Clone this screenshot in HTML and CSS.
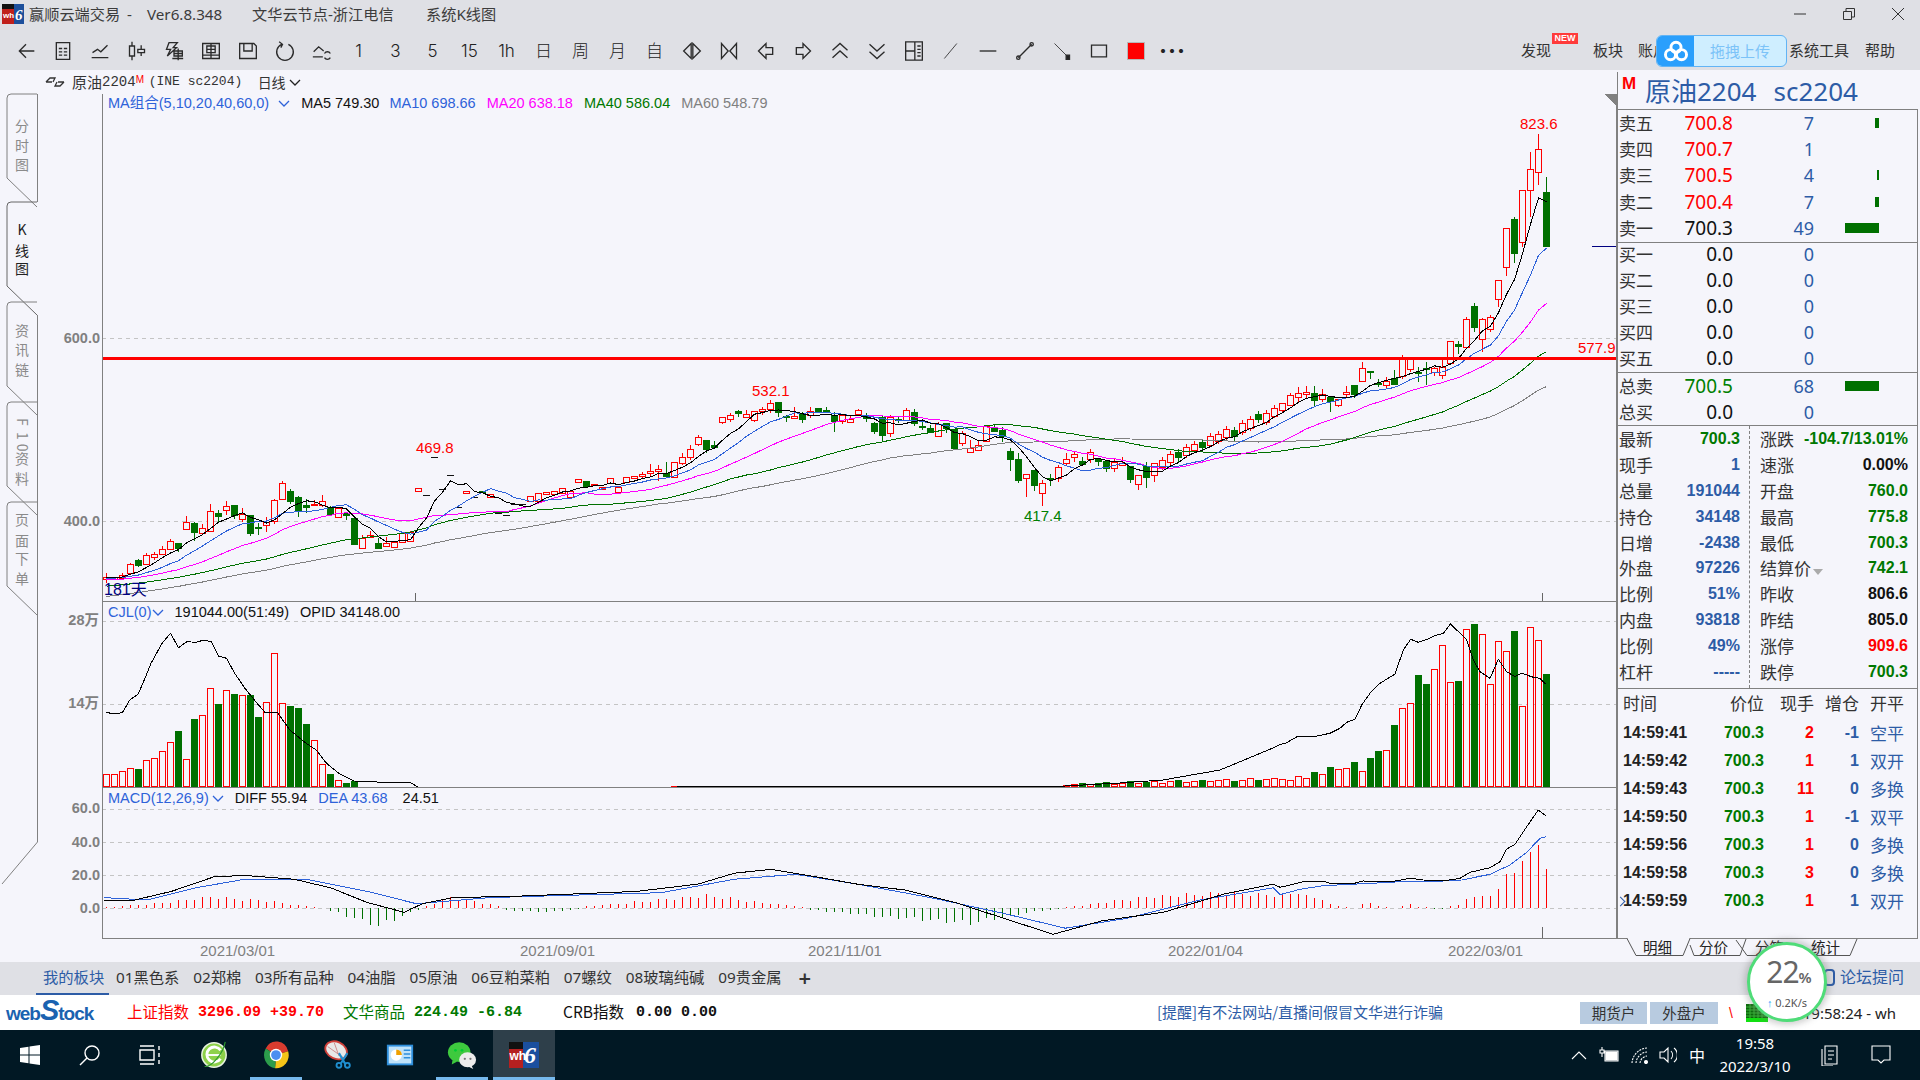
FILE: index.html
```html
<!DOCTYPE html>
<html lang="zh">
<head>
<meta charset="utf-8">
<title>赢顺云端交易</title>
<link rel="stylesheet" href="styles.css">
</head>
<body>
<div class="app">
  <header class="titlebar">
    <svg class="applogo" viewBox="0 0 22 20"><rect width="12" height="20" fill="#c0201c"/><rect x="12" width="10" height="20" fill="#1d4f9c"/><rect x="0" width="12" height="5" fill="#111"/><text x="1" y="14" class="wh">wh</text><text x="13" y="16" class="six">6</text></svg>
    <span class="t-app">赢顺云端交易</span><span class="t-dash">-</span><span class="t-ver">Ver6.8.348</span>
    <span class="t-node">文华云节点-浙江电信</span><span class="t-sys">系统K线图</span>
    <div class="winctl">
      <svg viewBox="0 0 12 12"><path d="M0 6H12"/></svg>
      <svg viewBox="0 0 12 12"><path d="M0.5 3.5H8.5V11.5H0.5ZM3 3V0.5H11.5V9H9"/></svg>
      <svg viewBox="0 0 12 12"><path d="M0 0L12 12M12 0L0 12"/></svg>
    </div>
  </header>

  <nav class="toolbar">
    <div class="tools">
      <span class="ti"><svg viewBox="0 0 24 24"><path d="M22 12H5M12 4L4 12L12 20"/></svg></span>
      <span class="ti"><svg viewBox="0 0 24 24"><path d="M4 2H20V22H4ZM7 9H11M13 9H17M7 13H11M13 13H17M7 17H11M13 17H17"/></svg></span>
      <span class="ti"><svg viewBox="0 0 24 24"><path d="M2 20H22M3 14L9 10L13 13L21 5"/></svg></span>
      <span class="ti"><svg viewBox="0 0 24 24"><path d="M3 6H9V18H3ZM6 1V6M6 18V23M13 10H21V14H13ZM17 5V10M17 14V18"/></svg></span>
      <span class="ti"><svg viewBox="0 0 24 24"><path d="M6 2H16L11 8H15L4 18L8 10H3ZM12 12H22V18H12ZM17 9V23M12 15H22M10 21H23"/></svg></span>
      <span class="ti"><svg viewBox="0 0 24 24"><path d="M2 3H22V21H2ZM7 6H17V14H7ZM7 10H17M12 3V21M2 17H22"/></svg></span>
      <span class="ti"><svg viewBox="0 0 24 24"><path d="M2 3H19L22 6V21H2ZM7 3V12H17V3"/></svg></span>
      <span class="ti"><svg viewBox="0 0 24 24"><path d="M8 4A10 10 0 1 0 16 4M5 1L9 4L7 8"/></svg></span>
      <span class="ti"><svg viewBox="0 0 24 24"><path d="M2 13L8 7L14 12M1 19H13M22 15A4 4 0 0 0 15 15M15 20A4 4 0 0 0 22 20"/></svg></span>
      <span class="ti txt">1</span><span class="ti txt">3</span><span class="ti txt">5</span><span class="ti txt">15</span><span class="ti txt">1h</span>
      <span class="ti txt">日</span><span class="ti txt">周</span><span class="ti txt">月</span><span class="ti txt">自</span>
      <span class="ti"><svg viewBox="0 0 24 24"><path d="M11 3L2 12L11 21ZM13 3L22 12L13 21Z"/></svg></span>
      <span class="ti"><svg viewBox="0 0 24 24"><path d="M3 3V21L11 12ZM21 3V21L13 12Z"/></svg></span>
      <span class="ti"><svg viewBox="0 0 24 24"><path d="M3 12L12 3V8H20V16H12V21Z"/></svg></span>
      <span class="ti"><svg viewBox="0 0 24 24"><path d="M21 12L12 3V8H4V16H12V21Z"/></svg></span>
      <span class="ti"><svg viewBox="0 0 24 24"><path d="M3 11L12 3L21 11M3 20L12 12L21 20"/></svg></span>
      <span class="ti"><svg viewBox="0 0 24 24"><path d="M3 4L12 12L21 4M3 13L12 21L21 13"/></svg></span>
      <span class="ti"><svg viewBox="0 0 24 24"><path d="M2 1H22V23H2ZM13 1V23M2 12H13M16 6H20M16 10H20M16 14H20M16 18H20"/></svg></span>
      <span class="ti"><svg viewBox="0 0 24 24"><path class="thin" d="M4 21L19 3"/></svg></span>
      <span class="ti"><svg viewBox="0 0 24 24"><path d="M2 12H22"/></svg></span>
      <span class="ti"><svg viewBox="0 0 24 24"><path d="M4 20L20 4"/><circle cx="4" cy="20" r="2"/><circle cx="20" cy="4" r="2"/></svg></span>
      <span class="ti"><svg viewBox="0 0 24 24"><path class="thin" d="M3 3L20 20"/><rect x="17" y="17" width="4" height="5" class="fillk"/></svg></span>
      <span class="ti"><svg viewBox="0 0 24 24"><path d="M3 5H21V19H3Z"/></svg></span>
      <span class="ti"><i class="redsq"></i></span>
      <span class="ti dots">···</span>
    </div>
    <div class="menu">
      <span class="m1">发现</span><b class="newbadge">NEW</b><span class="m2">板块</span><span class="m3">账户</span><span class="m4">系统工具</span><span class="m5">帮助</span>
    </div>
  </nav>

  <main class="workspace">
    <aside class="sidebar"><svg id="side" viewBox="0 70 38 892"></svg></aside>

    <section class="chartcol">
      <div class="symbol">
        <svg class="sym-ic" viewBox="0 0 20 10"><path d="M1 5L5 1H10L8 5M19 5L15 9H10L12 5M1 5H7M13 5H19"/></svg>
        <span class="sym-cn">原油</span><span class="sym-m">2204</span><sup class="sym-sup">M</sup><span class="sym-code">(INE sc2204)</span><span class="sym-cycle">日线</span>
        <svg class="chev dark" viewBox="0 0 12 7"><path d="M1 1L6 6L11 1"/></svg>
      </div>
      <div class="pane p1">
        <svg id="p1" viewBox="38 94 1579 508"></svg>
        <div class="phead">
          <span class="blue">MA组合(5,10,20,40,60,0)</span><svg class="chev wide" viewBox="0 0 12 7"><path d="M1 1L6 6L11 1"/></svg>
          <span class="k ml10">MA5 749.30</span><span class="blue ml9">MA10 698.66</span><span class="mag ml11">MA20 638.18</span><span class="grn ml11">MA40 586.04</span><span class="gry ml11">MA60 548.79</span>
        </div>
      </div>
      <div class="pane p2">
        <svg id="p2" viewBox="38 602 1579 186"></svg>
        <div class="phead h2">
          <span class="blue">CJL(0)</span><svg class="chev tight" viewBox="0 0 12 7"><path d="M1 1L6 6L11 1"/></svg>
          <span class="k ml11">191044.00(51:49)</span><span class="k ml10">OPID 34148.00</span>
        </div>
      </div>
      <div class="pane p3">
        <svg id="p3" viewBox="38 788 1579 151"></svg>
        <div class="phead h2">
          <span class="blue">MACD(12,26,9)</span><svg class="chev" viewBox="0 0 12 7"><path d="M1 1L6 6L11 1"/></svg>
          <span class="k ml10">DIFF 55.94</span><span class="blue ml10">DEA 43.68</span><span class="k ml14">24.51</span>
        </div>
      </div>
      <div class="dates"><svg id="pd" viewBox="38 939 1579 23"></svg></div>
    </section>

    <aside class="panel">
      <div class="ptitle"><b class="pm">M</b><span class="pname">原油2204</span><span class="pcode">sc2204</span></div>
      <div class="box">
        <div class="sec s1">
          <div class="br"><span>卖五</span><span class="r">700.8</span><span class="q">7</span><span class="bar"><i style="width:4px"></i></span></div>
          <div class="br"><span>卖四</span><span class="r">700.7</span><span class="q">1</span><span class="bar"></span></div>
          <div class="br"><span>卖三</span><span class="r">700.5</span><span class="q">4</span><span class="bar"><i style="width:2px"></i></span></div>
          <div class="br"><span>卖二</span><span class="r">700.4</span><span class="q">7</span><span class="bar"><i style="width:4px"></i></span></div>
          <div class="br"><span>卖一</span><span class="kk">700.3</span><span class="q">49</span><span class="bar"><i style="width:34px"></i></span></div>
        </div>
        <div class="sec s2">
          <div class="br"><span>买一</span><span class="kk">0.0</span><span class="q">0</span><span class="bar"></span></div>
          <div class="br"><span>买二</span><span class="kk">0.0</span><span class="q">0</span><span class="bar"></span></div>
          <div class="br"><span>买三</span><span class="kk">0.0</span><span class="q">0</span><span class="bar"></span></div>
          <div class="br"><span>买四</span><span class="kk">0.0</span><span class="q">0</span><span class="bar"></span></div>
          <div class="br"><span>买五</span><span class="kk">0.0</span><span class="q">0</span><span class="bar"></span></div>
        </div>
        <div class="sec s3">
          <div class="br"><span>总卖</span><span class="gg">700.5</span><span class="q">68</span><span class="bar"><i style="width:34px"></i></span></div>
          <div class="br"><span>总买</span><span class="kk">0.0</span><span class="q">0</span><span class="bar"></span></div>
        </div>
        <div class="stats">
          <div class="col lc">
            <div class="st"><span>最新</span><b class="grn">700.3</b></div>
            <div class="st"><span>现手</span><b class="bl">1</b></div>
            <div class="st"><span>总量</span><b class="bl">191044</b></div>
            <div class="st"><span>持仓</span><b class="bl">34148</b></div>
            <div class="st"><span>日增</span><b class="bl">-2438</b></div>
            <div class="st"><span>外盘</span><b class="bl">97226</b></div>
            <div class="st"><span>比例</span><b class="bl">51%</b></div>
            <div class="st"><span>内盘</span><b class="bl">93818</b></div>
            <div class="st"><span>比例</span><b class="bl">49%</b></div>
            <div class="st"><span>杠杆</span><b class="bl">-----</b></div>
          </div>
          <div class="col rc">
            <div class="st"><span>涨跌</span><b class="grn">-104.7/13.01%</b></div>
            <div class="st"><span>速涨</span><b class="kb">0.00%</b></div>
            <div class="st"><span>开盘</span><b class="grn">760.0</b></div>
            <div class="st"><span>最高</span><b class="grn">775.8</b></div>
            <div class="st"><span>最低</span><b class="grn">700.3</b></div>
            <div class="st"><span>结算价<i class="tri"></i></span><b class="grn">742.1</b></div>
            <div class="st"><span>昨收</span><b class="kb">806.6</b></div>
            <div class="st"><span>昨结</span><b class="kb">805.0</b></div>
            <div class="st"><span>涨停</span><b class="rd">909.6</b></div>
            <div class="st"><span>跌停</span><b class="grn">700.3</b></div>
          </div>
        </div>
        <div class="ticks">
          <div class="th"><span class="tl">时间</span><span>价位</span><span>现手</span><span>增仓</span><span>开平</span></div>
          <div class="tr"><b class="tm">14:59:41</b><b class="grn">700.3</b><b class="rd">2</b><b class="bl">-1</b><span class="ty">空平</span></div>
          <div class="tr"><b class="tm">14:59:42</b><b class="grn">700.3</b><b class="rd">1</b><b class="bl">1</b><span class="ty">双开</span></div>
          <div class="tr"><b class="tm">14:59:43</b><b class="grn">700.3</b><b class="rd">11</b><b class="bl">0</b><span class="ty">多换</span></div>
          <div class="tr"><b class="tm">14:59:50</b><b class="grn">700.3</b><b class="rd">1</b><b class="bl">-1</b><span class="ty">双平</span></div>
          <div class="tr"><b class="tm">14:59:56</b><b class="grn">700.3</b><b class="rd">1</b><b class="bl">0</b><span class="ty">多换</span></div>
          <div class="tr"><b class="tm">14:59:58</b><b class="grn">700.3</b><b class="rd">3</b><b class="bl">0</b><span class="ty">多换</span></div>
          <div class="tr last"><b class="tm">14:59:59</b><b class="grn">700.3</b><b class="rd">1</b><b class="bl">1</b><span class="ty">双开</span></div>
        </div>
      </div>
      <svg id="ptabs" class="ptabs" viewBox="1617 936 303 26"></svg>
    </aside>
  </main>

  <div class="strip">
    <span class="on">我的板块</span><span>01黑色系</span><span>02郑棉</span><span>03所有品种</span><span>04油脂</span><span>05原油</span><span>06豆粕菜粕</span><span>07螺纹</span><span>08玻璃纯碱</span><span>09贵金属</span><span class="plus">+</span>
    <span class="forum">论坛提问</span>
  </div>

  <div class="status">
    <span class="weblogo">web<em>S</em>tock</span>
    <span class="lb w71 red1">上证指数</span><span class="num w145 red1">3296.09 +39.70</span>
    <span class="lb w71 grn">文华商品</span><span class="num w149 grn">224.49 -6.84</span>
    <span class="lb w73 k">CRB指数</span><span class="num w521 k">0.00 0.00</span>
    <span class="notice">[提醒]有不法网站/直播间假冒文华进行诈骗</span>
    <span class="sbtn">期货户</span><span class="sbtn b2">外盘户</span>
    <span class="slash">\</span>
    <svg class="netbox" viewBox="0 0 22 18"><rect width="22" height="18" fill="#0a6a0a"/><path d="M0 3H22M0 6H22M0 9H22M0 12H22M4 0V18M8 0V18M12 0V18M16 0V18" stroke="#39b339"/><rect y="14" width="22" height="4" fill="#12e012"/></svg>
    <span class="clockline">19:58:24 - wh</span>
  </div>

  <footer class="taskbar">
    <span class="tb sm"><svg viewBox="0 0 24 24"><path class="wf" d="M2 5L10.5 3.7V11.5H2ZM11.5 3.5L22 2V11.5H11.5ZM2 12.5H10.5V20.3L2 19ZM11.5 12.5H22V22L11.5 20.5Z"/></svg></span>
    <span class="tb sm"><svg viewBox="0 0 24 24"><circle class="ws" cx="14" cy="10" r="7"/><path class="ws" d="M9 15L2 22"/></svg></span>
    <span class="tb sm third"><svg viewBox="0 0 24 24"><path class="ws" d="M2 7H16V17H2ZM2 3H16M2 21H16M21 3V7M21 10V14M21 17V21"/></svg></span>
    <span class="tb"><svg viewBox="0 0 30 32"><circle cx="15" cy="16" r="13" fill="#8ed14a"/><circle cx="15" cy="16" r="13" fill="none" stroke="#e8f2e0" stroke-width="1.6"/><path d="M8 15H22V17H8Z" fill="#fff"/><path d="M22 20A8 8 0 1 1 22 11" fill="none" stroke="#fff" stroke-width="3"/><path d="M5 28C12 30 25 14 27 2" fill="none" stroke="#2f9a2f" stroke-width="1.2"/></svg></span>
    <span class="tb ul"><svg viewBox="0 0 32 32"><path d="M16 16L5 9A13 14 0 0 1 29 12Z" fill="#d93c2f"/><path d="M16 16L29 12A13 14 0 0 1 15 30Z" fill="#f5c518"/><path d="M16 16L15 30A13 14 0 0 1 5 9Z" fill="#2c9c4b"/><circle cx="16" cy="16" r="6.6" fill="#fff"/><circle cx="16" cy="16" r="5.2" fill="#4b8ef0"/></svg></span>
    <span class="tb"><svg viewBox="0 0 32 32"><ellipse cx="14" cy="11" rx="12" ry="9" fill="#e8e8e8" stroke="#d0403a" stroke-width="2" transform="rotate(25 14 11)"/><path d="M5 7L22 19M12 3L17 17" stroke="#c88" stroke-width="1"/><path d="M17 14L24 26M26 14L19 25" stroke="#1f8fd0" stroke-width="2.2"/><circle cx="17" cy="27" r="2.6" fill="none" stroke="#1f8fd0" stroke-width="2"/><circle cx="26" cy="27" r="2.6" fill="none" stroke="#1f8fd0" stroke-width="2"/></svg></span>
    <span class="tb"><svg viewBox="0 0 32 28"><rect x="2" y="3" width="28" height="22" fill="#2f8fdc"/><rect x="4" y="5" width="24" height="18" fill="#bfe2fa"/><circle cx="12" cy="14" r="6" fill="#fff"/><path d="M12 14V8A6 6 0 0 1 18 14Z" fill="#f0a000"/><path d="M20 9H27M20 13H27M20 17H27" stroke="#2f8fdc" stroke-width="1.6"/></svg></span>
    <span class="tb ul"><svg viewBox="0 0 32 32"><ellipse cx="13" cy="13" rx="12" ry="10.5" fill="#3ec93e"/><path d="M6 21L5 26L11 23Z" fill="#3ec93e"/><circle cx="9" cy="11" r="1.5" fill="#0c3"/><circle cx="16" cy="11" r="1.5" fill="#0c3"/><ellipse cx="22" cy="21" rx="9" ry="8" fill="#ececec"/><path d="M26 27L28 31L22 28Z" fill="#ececec"/><circle cx="19" cy="20" r="1.2" fill="#777"/><circle cx="25" cy="20" r="1.2" fill="#777"/></svg></span>
    <span class="tb act"><svg viewBox="0 0 30 26"><rect width="14" height="26" fill="#b52020"/><rect x="14" width="16" height="26" fill="#1b4f9e"/><rect width="14" height="7" fill="#111"/><text x="0.5" y="18" class="wh2">wh</text><text x="15" y="21" class="six2">6</text></svg></span>
    <div class="tray">
      <svg class="tr1" viewBox="0 0 16 9"><path d="M1 8L8 1L15 8"/></svg>
      <svg class="tr2" viewBox="0 0 20 16"><path d="M6 4H19V14H6ZM1 3V6H5V3ZM3 0V3M3 6V10"/><rect x="7" y="5" width="11" height="8" fill="#fff"/></svg>
      <svg class="tr3" viewBox="0 0 18 18"><path d="M1 17A16 16 0 0 1 16 2M5 17A12 12 0 0 1 16 6M9 17A8 8 0 0 1 16 10" stroke-dasharray="2 1"/><circle cx="15" cy="16" r="1.5" fill="#fff"/></svg>
      <svg class="tr4" viewBox="0 0 18 18"><path d="M1 6H5L9 2V16L5 12H1ZM12 5A6 6 0 0 1 12 13M15 2A9 9 0 0 1 15 16"/></svg>
      <span class="ime">中</span>
      <div class="clock"><span>19:58</span><span>2022/3/10</span></div>
      <svg class="tr5" viewBox="0 0 18 22"><path d="M4 2H16V20H4ZM1 5V22H12M7 7H13M7 11H13M7 15H11"/></svg>
      <svg class="tr6" viewBox="0 0 20 20"><path d="M1 1H19V15H13L10 18L7 15H1Z"/></svg>
    </div>
  </footer>

  <div class="upload">
    <span class="up-l"><svg viewBox="0 0 28 24"><circle cx="14" cy="8" r="5.5"/><circle cx="8" cy="16" r="5.5"/><circle cx="20" cy="16" r="5.5"/></svg></span>
    <span class="up-r">拖拽上传</span>
  </div>

  <div class="meter">
    <div class="pct">22<small>%</small></div>
    <div class="spd"><i>↑</i> 0.2K/s</div>
  </div>
</div>
<script src="chart.js"></script>
</body>
</html>
```
FILE: styles.css
```css
*{box-sizing:border-box}
html,body{margin:0;padding:0}
body{width:1920px;height:1080px;overflow:hidden;background:#f5f5fb;color:#333;font-family:"Noto Sans","Noto Sans CJK SC",sans-serif;font-size:15px}
.app{position:relative;width:1920px;height:1080px;display:flex;flex-direction:column}

/* title */
.titlebar{height:34px;background:#dfe0e5;display:flex;align-items:center;line-height:20px;color:#3c3c3c;flex:none;font-size:15.2px}
.applogo{width:22px;height:20px;margin-left:2px;margin-top:-6px;flex:none}
.applogo .wh{font:bold 8px "Liberation Sans",sans-serif;fill:#fff}
.applogo .six{font:italic bold 15px "Liberation Serif",serif;fill:#fff}
.titlebar span{margin-top:-6px}
.t-app{margin-left:5px;width:98px}
.t-dash{width:20px}
.t-ver{width:105px}
.t-node{width:174px}
.winctl{margin-left:auto;margin-right:16px;margin-top:-6px;display:flex;gap:37px}
.winctl svg{width:12px;height:12px;fill:none;stroke:#333;stroke-width:1}

/* toolbar */
.toolbar{height:36px;background:#dfe0e5;display:flex;flex:none;align-items:flex-start}
.tools{display:flex;padding-left:7px;height:34px}
.ti{width:37px;height:34px;display:flex;align-items:center;justify-content:center;color:#222;font-size:17px;line-height:20px;font-family:"Inter","Noto Sans CJK SC",sans-serif;font-weight:300}
.ti svg{width:20px;height:20px;fill:none;stroke:#2a2a2a;stroke-width:1.6}
.ti .thin{stroke-width:1}
.ti .fillk{fill:#222}
.redsq{display:block;width:18px;height:18px;background:#f00;border:1px solid #b8b8b8}
.ti.dots{font-size:24px;font-weight:700;letter-spacing:1px}
.menu{position:relative;flex:1;height:34px}
.menu>*{position:absolute;top:6px;line-height:20px}
.m1{left:330px}.m2{left:402px}.m3{left:447px}.m4{left:598px}.m5{left:674px}
.menu .newbadge{left:361px;top:-1px;width:26px;height:11px;background:#ff3b3b;color:#fff;font:bold 9px/11px "Liberation Sans",sans-serif;text-align:center}

/* workspace */
.workspace{height:892px;display:flex;flex:none}
.sidebar{width:38px;flex:none}
.sidebar svg{display:block;width:38px;height:892px}
#side text{font:14px "Noto Sans CJK SC",sans-serif;fill:#8a8a8a;text-anchor:middle}
#side text.active{fill:#222}
.chartcol{width:1579px;flex:none;display:flex;flex-direction:column}
.symbol{height:24px;display:flex;align-items:center;padding-left:7px;line-height:20px;color:#333}
.sym-ic{width:20px;height:10px;fill:none;stroke:#333;stroke-width:1.3;flex:none}
.sym-cn{margin-left:7px;font:15px/20px "Noto Sans CJK SC",sans-serif}
.sym-m{font:14px/20px "Liberation Mono",monospace}
.sym-sup{font:10px/10px "Liberation Sans",sans-serif;color:#f00;align-self:flex-start;margin-top:5px;width:13px}
.sym-code{font:13px/20px "Liberation Mono",monospace;width:109px}
.sym-cycle{font:14px/20px "Noto Sans CJK SC",sans-serif}
.chev{width:12px;height:7px;fill:none;stroke:#2e62d9;stroke-width:1.3;margin-left:3px;flex:none}
.chev.dark{stroke:#222}
.chev.wide{margin-left:9px}
.chev.tight{margin-left:0}
.pane{position:relative;flex:none}
.pane>svg:first-child{position:absolute;left:0;top:0;width:1579px;display:block}
.p1{height:508px}.p1>svg:first-child{height:508px}
.p2{height:186px}.p2>svg:first-child{height:186px}
.p3{height:151px}.p3>svg:first-child{height:151px}
.phead{position:relative;display:flex;align-items:center;padding-left:70px;height:18px;font:14.5px/18px "Liberation Sans","Noto Sans CJK SC",sans-serif;white-space:pre}
.h2{height:20px}
.blue{color:#2e62d9}.mag{color:#f0f}.grn{color:#007800}.gry{color:#808080}.k{color:#111}
.ml9{margin-left:10px}.ml10{margin-left:11px}.ml11{margin-left:11px}.ml14{margin-left:15px}
.dates{height:23px;flex:none}
.dates svg{display:block;width:1579px;height:23px}
svg text{white-space:pre}
.chart-t{font:15px "Liberation Sans",sans-serif}
.axis-t{font:bold 14.5px "Liberation Sans","Noto Sans CJK SC",sans-serif;fill:#808080;text-anchor:end}

/* right panel */
.panel{width:303px;flex:none;display:flex;flex-direction:column}
.ptitle{height:37px;border-left:1px solid #808080;margin-top:2px;display:flex;align-items:center;position:relative;color:#2d5ca6;font:26px/36px "Noto Sans","Noto Sans CJK SC",sans-serif;padding-left:27px}
.pm{position:absolute;left:4px;top:2px;color:#f00;font:bold 17px/20px "Liberation Sans",sans-serif}
.pcode{margin-left:17px}
.box{width:301px;height:830px;border:1px solid #808080;flex:none;display:flex;flex-direction:column}
.sec{flex:none;border-bottom:1px solid #808080}
.s1{height:133px}
.s2{height:130px}
.s2 .br{height:26px}
.s2 .br:first-child{margin-top:-2px}
.s3{height:53px}
.br{display:grid;grid-template-columns:40px 75px 81px 65px;height:26.2px;align-items:center;line-height:26px;font-size:17px}
.br>span:first-child{padding-left:1px;font-family:"Noto Sans CJK SC",sans-serif;font-size:17px;color:#333}
.br>span:nth-child(2){text-align:right;font-size:19px}
.br .r{color:#f00}.br .kk{color:#111}.br .gg{color:#008000}
.br .q{text-align:right;color:#2d5ca6;font-size:18px}
.bar{display:flex;justify-content:flex-end;height:10px}
.bar i{display:block;height:10px;background:#007000}
.stats{height:263px;display:grid;grid-template-columns:132px 167px;border-bottom:1px solid #808080;flex:none}
.col{display:flex;flex-direction:column}
.lc{border-right:1px dashed #808080;padding-right:9px}
.rc{padding-left:9px;padding-right:9px}
.st{height:25.9px;display:flex;justify-content:space-between;align-items:center;line-height:26px;font-family:"Noto Sans CJK SC",sans-serif;font-size:17px;padding-left:1px;color:#333}
.st b{font:bold 16px/26px "Liberation Sans",sans-serif}
.bl{color:#2d5ca6}.rd{color:#f00}.kb{color:#111}
.st b.grn,.tr b.grn{color:#007800}
.tri{display:inline-block;width:0;height:0;border:5px solid transparent;border-top:6px solid #aaa;border-bottom:0;margin-left:2px}
.ticks{padding:2px 0 0 5px;flex:1}
.th,.tr{display:grid;grid-template-columns:80px 61px 50px 45px 45px;align-items:center;text-align:right;line-height:28px;height:28px;position:relative}
.th{font:17px/24px "Noto Sans CJK SC",sans-serif;color:#333;height:28px;padding-bottom:4px}
.tl,.tm{text-align:left}
.tr b{font:bold 16px/28px "Liberation Sans",sans-serif}
.tm{color:#222}
.ty{font:17px/28px "Noto Sans CJK SC",sans-serif;color:#2d5ca6;margin-top:-1px}
.last::before{content:"";position:absolute;left:-6px;top:11px;width:6px;height:6px;border-top:1.5px solid #2d5ca6;border-right:1.5px solid #2d5ca6;transform:rotate(45deg)}
.ptabs{display:block;width:303px;height:26px;margin-top:-3px;position:relative;overflow:visible}
.ptabs text{font:14.5px "Noto Sans CJK SC",sans-serif;fill:#222}

/* strip */
.strip{height:33px;background:#dfe0e5;display:flex;align-items:center;gap:13.8px;padding:0 0 3px 43px;flex:none;line-height:20px;color:#333;position:relative;font:15.3px/20px "Noto Sans","Noto Sans CJK SC",sans-serif}
.strip .on{color:#2d5ca6;position:relative;margin-right:-2px}
.strip .on::after{content:"";position:absolute;left:-7px;right:-5px;bottom:-8px;height:2px;background:#2d5ca6}
.strip .plus{font-size:22px;font-weight:600;margin-left:3px}
.strip .forum{margin-left:auto;margin-right:16px;color:#2d5ca6;font-size:16px;display:flex;align-items:center}
.strip .forum::before{content:"";display:block;width:7px;height:13px;border:2px solid #2d5ca6;border-radius:4px;margin-right:5px}

/* status */
.status{height:35px;background:#fff;display:flex;align-items:center;flex:none;line-height:20px}
.weblogo{width:127px;padding-left:6px;color:#1a62b0;font:bold 19px/24px "Liberation Sans",sans-serif;letter-spacing:-1px;flex:none}
.weblogo em{font-style:italic;font-size:29px;line-height:20px}
.lb{font:15.5px/20px "Noto Sans CJK SC",sans-serif;flex:none;margin-top:-3px}
.num{font:bold 15px/20px "Liberation Mono",monospace;flex:none}
.red1{color:#f00}
.w71{width:71px}.w73{width:73px}.w145{width:145px}.w149{width:149px}.w521{width:521px}
.status .grn{color:#007800}
.notice{width:423px;flex:none;font:15px/20px "Noto Sans CJK SC",sans-serif;color:#2d5ca6;margin-top:-1px}
.sbtn{width:67px;height:22px;background:#b8cbe0;text-align:center;font:14.5px/22px "Noto Sans CJK SC",sans-serif;flex:none;color:#333}
.b2{margin-left:3px;width:68px}
.slash{color:#f00;margin-left:11px;width:17px;font:14px/20px "Liberation Sans",sans-serif}
.netbox{width:22px;height:18px;flex:none}
.clockline{margin-left:auto;margin-right:24px;color:#222;font:15px/20px "Noto Sans",sans-serif}

/* taskbar */
.taskbar{height:50px;background:#011824;display:flex;flex:none;align-items:center;position:relative;color:#fff}
.tb{width:62px;height:50px;display:flex;align-items:center;justify-content:center;flex:none;position:relative}
.tb svg{width:30px;height:30px}
.tb .wf{fill:#fff}
.tb .ws{fill:none;stroke:#fff;stroke-width:1.4}
.tb.sm{width:60px}
.tb.sm svg{width:24px;height:24px}
.tb.third{margin-right:3px}
.ul::after,.act::after{content:"";position:absolute;left:5px;right:5px;bottom:0;height:3px;background:#76b9ed}
.act{background:#2e3f4a}
.act::after{left:0;right:0}
.wh2{font:bold 12px "Liberation Sans",sans-serif;fill:#fff}
.six2{font:italic bold 24px "Liberation Serif",serif;fill:#fff}
.tray{margin-left:auto;display:flex;align-items:center;height:50px;padding-right:29px}
.tray svg{fill:none;stroke:#fff;stroke-width:1.1;flex:none}
.tr1{width:16px;height:9px}
.tr2{width:20px;height:16px;margin-left:12px}
.tr3{width:18px;height:18px;margin-left:12px}
.tr4{width:18px;height:18px;margin-left:10px}
.ime{margin-left:12px;font:16px/20px "Noto Sans CJK SC",sans-serif}
.clock{width:78px;margin-left:11px;display:flex;flex-direction:column;align-items:center;font:15px/23px "Noto Sans",sans-serif}
.tr5{width:18px;height:22px;margin-left:27px}
.tr6{width:20px;height:20px;margin-left:32px}

/* floats */
.upload{position:absolute;left:1656px;top:35px;width:131px;height:32px;border:1px solid #62b4f5;border-radius:6px;display:flex;overflow:hidden;background:#cfeeff}
.up-l{width:37px;background:#2a9ffc;display:flex;align-items:center;justify-content:center;flex:none}
.up-l svg{width:26px;height:22px;fill:none;stroke:#fff;stroke-width:3.2}
.up-r{flex:1;text-align:center;color:#7cc3f8;font:15px/30px "Noto Sans CJK SC",sans-serif}
.meter{position:absolute;left:1747px;top:942px;width:80px;height:80px;border-radius:50%;background:#fff;border:3px solid #4fdc78;box-shadow:0 0 6px 3px rgba(120,120,120,.35);display:flex;flex-direction:column;align-items:center;color:#555}
.pct{font:30px/34px "Noto Sans",sans-serif;margin:10px 0 0 3px;letter-spacing:-1px;color:#666}
.pct small{font-size:15px;font-weight:600}
.spd{font:11px/14px "Noto Sans",sans-serif;margin-top:2px;color:#555}
.spd i{font-style:normal;color:#2a9ffc;font-weight:700}
```
FILE: chart.js
```js
(function(){
var BG='#f5f5fb',RED='#ff0000',GRN='#007000',LINE='#808080',GRID='#c4c4c4';
// type: 0 red hollow, 1 green solid, 2 black dash; top, bottom, high, low (page pixels)
var C=[[0,577,579,573,583],[0,577,579],[0,575,578,573,580],[0,564,573,563,574],[1,560,566,559,567],[0,555,564,553,565],[0,554,557,552,560],[0,549,554,546,555],[0,541,549,539,550],[1,543,549,543,552],
[0,522,529,516,530],[1,523,533,522,541],[0,528,533,524,535],[0,511,531,504,531],[1,513,517,510,523],[0,506,510,501,515],[1,505,516,505,519],[0,514,519,508,522],[1,515,534,515,536],[1,527,529,523,535],
[0,522,525,517,532],[0,500,521,499,524],[0,483,499,481,500],[1,491,502,489,504],[1,497,511,496,517],[1,505,508,499,513],[0,504,505,500,506],[0,501,505,495,507],[1,507,515,506,516],[0,508,517,507,518],
[1,513,516,512,520],[1,518,545],[0,538,548,535,549],[0,535,537,531,538],[1,543,549,538,549],[0,543,546,537,546],[0,542,547,541,547],[0,533,542,532,542],[0,532,541,531,541],[0,488,491],
[2,495,495],[2,457,457],[2,489,489],[2,475,475],[2,507,507],[0,491,493],[2,497,497],[1,491,493],[0,494,497],[2,513,513],
[2,515,515],[2,504,504],[2,504,504],[0,496,501],[0,493,501],[0,492,494],[0,491,494],[0,488,493],[0,491,497],[0,479,482],
[1,481,487],[0,484,485],[0,487,489],[0,478,483],[0,487,492],[0,477,482],[0,476,478],[0,474,476,472,479],[0,471,473,464,477],[0,469,471,465,481],
[1,473,477,462,477],[0,462,477],[0,457,463,453,465],[0,449,457,445,460],[0,437,444,435,446],[1,440,450,440,453],[1,445,448,441,448],[0,417,422,417,424],[0,415,419,413,422],[1,411,414,410,417],
[0,414,417,410,417],[0,411,420,411,422],[0,409,411,407,415],[0,403,409,400,413],[1,402,413,402,417],[1,416,417,415,422],[0,416,418,407,419],[1,413,420,412,423],[0,411,415,407,418],[1,408,412],
[1,410,412,407,412],[1,415,422,412,432],[0,415,421,415,424],[0,419,422,415,422],[0,410,414,409,414],[1,415,419,413,422],[1,423,432,422,434],[1,417,436,415,441],[0,417,433,415,437],[1,419,421,417,423],
[0,410,420,408,420],[1,412,424,409,426],[1,426,428,420,430],[1,428,433,425,433],[0,424,436,422,436],[1,423,429,423,433],[1,429,449],[0,433,443,431,446],[0,448,452,440,452],[0,445,450,440,451],
[0,426,441],[1,428,432,425,432],[1,430,437,427,442],[1,451,460,448,471],[1,459,481,453,483],[0,474,478,474,497],[1,470,486,470,491],[0,483,493,480,506],[1,478,480,474,486],[0,467,478,465,482],
[0,459,463,453,465],[0,454,457,452,462],[1,461,465,457,465],[0,452,459,449,463],[1,459,462,459,466],[1,461,469,461,472],[0,462,468,459,472],[0,463,465,457,465],[1,466,480,466,483],[0,475,484,475,490],
[1,466,478,462,488],[0,463,475,463,482],[0,460,467,457,470],[0,454,462,451,465],[1,452,458,449,462],[0,447,455,444,458],[0,444,450,441,453],[1,442,448,439,452],[0,436,445,433,447],[0,434,441,431,444],
[0,429,437,426,440],[1,430,437,427,441],[0,423,432,420,435],[0,419,428,416,431],[1,414,420,411,423],[0,413,422,410,425],[0,408,416,405,418],[0,403,410,403,413],[0,395,405,393,405],[0,393,397,387,403],
[0,392,394,386,398],[1,393,401,386,407],[0,394,399,389,402],[1,397,402,397,412],[0,399,405,399,407],[0,392,394,386,397],[1,385,395,385,398],[0,368,381,362,381],[1,371,373,371,379],[1,383,385,379,387],
[0,381,385,377,388],[1,378,385,370,385],[0,359,376,355,379],[0,358,369,358,372],[1,372,374,367,382],[1,368,370,362,385],[0,368,372,367,376],[0,367,375,359,379],[0,341,363],[1,344,347,341,354],
[0,319,347,317,349],[1,306,328,303,332],[0,319,339,318,352],[0,317,329,315,332],[0,280,299,280,307],[0,228,267,228,276],[1,219,254,217,263],[0,190,242,190,247],[0,169,190,152,217],[0,149,172,134,185],
[1,192,247,177,247]];
var n=C.length;
function X(i){return 106+8*i}
function rect(x,y,w,h,f){return '<rect x="'+x+'" y="'+y+'" width="'+w+'" height="'+h+'" fill="'+f+'"/>'}
function poly(pts,c,w){return '<polyline points="'+pts.map(function(p){return p[0]+','+p[1]}).join(' ')+'" fill="none" stroke="'+c+'" stroke-width="'+(w||1)+'"/>'}
function dash(y,x1,x2){return '<path d="M'+x1+' '+(y+.5)+'H'+x2+'" stroke="'+GRID+'" stroke-dasharray="4 4" fill="none"/>'}
function text(x,y,s,c,cls){return '<text x="'+x+'" y="'+y+'" fill="'+c+'" class="'+(cls||'chart-t')+'">'+s+'</text>'}
function axis(s){return '<text x="'+s[0]+'" y="'+s[1]+'" class="axis-t">'+s[2]+'</text>'}
function close(c){return c[0]===1?c[2]:c[1]}
function hist(k){return 578+.0158*k*k}
function ma(p){var out=[];for(var i=0;i<n;i++){var s=0;for(var j=i-p+1;j<=i;j++){s+=j>=0?close(C[j]):hist(-j)}out.push([X(i)+.5,+(s/p).toFixed(1)])}return out}

// main pane
var h='';
h+=dash(338,102,1616)+dash(521,102,1616);
h+='<g shape-rendering="crispEdges">';
h+=rect(102,94,1,508,LINE)+rect(1616,94,1,508,LINE);
C.forEach(function(c,i){
  var x=X(i),col=c[0]===1?GRN:RED;
  if(c[0]===2){h+=rect(x-3,c[1],7,1,'#111');return}
  var hi=c[3]===undefined?c[1]:c[3],lo=c[4]===undefined?c[2]:c[4];
  if(hi<c[1])h+=rect(x,hi,1,c[1]-hi,col);
  if(lo>c[2])h+=rect(x,c[2],1,lo-c[2],col);
  if(c[0]===1)h+=rect(x-3,c[1],7,Math.max(c[2]-c[1],2),GRN);
  else h+='<rect x="'+(x-2.5)+'" y="'+(c[1]+.5)+'" width="6" height="'+Math.max(c[2]-c[1],1)+'" fill="'+BG+'" stroke="'+RED+'"/>';
});
h+=poly(ma(60),'#808080')+poly(ma(40),GRN)+poly(ma(20),'#ff00ff')+poly(ma(10),'#2e62d9')+poly(ma(5),'#000');
h+=rect(103,357,1513,3,RED);
h+=rect(1592,246,24,1,'#000080');
h+=rect(415,593,1,8,'#666')+rect(1542,593,1,8,'#666');
h+=rect(102,601,1515,1,LINE);
h+='<polygon points="1605,94 1616,94 1616,106" fill="#808080"/>';
h+='</g>';
h+=axis([100,343,'600.0'])+axis([100,526,'400.0']);
h+=text(1578,353,'577.9',RED)+text(1520,129,'823.6',RED)+text(416,453,'469.8',RED)+text(752,396,'532.1',RED)+text(1024,521,'417.4','#008000');
h+='<text x="104" y="595" fill="#000080" class="chart-t" style="font-size:16px;font-family:\'Liberation Sans\',\'Noto Sans CJK SC\',sans-serif">181天</text>';
document.getElementById('p1').innerHTML=h;

// volume pane
var b=787;
var v1=[1122,1122,1114,1105,1107,1080,1075,1053,1027,993,1078,957,945,865,912,870,882,885,885,951,907,760,910,918,924,972,1021,1093,1122,1140,1149,1144];
var v1c=[0,0,0,0,1,0,0,0,0,1,0,1,0,0,1,0,1,0,1,1,0,0,0,1,1,1,0,0,1,0,1,1];
var v2=[538,541,529,535,516,523,501,508,505,486,514,474,453,451,375,325,310,225,252,208,136,247,243,88,72,103,253,124,154,93,319,82,121,222];
var v2c=[0,0,0,0,1,0,1,0,0,1,0,1,1,0,1,0,0,1,1,0,0,0,1,0,1,0,0,0,0,1,0,0,0,1];
var V=[];
for(var i=0;i<n;i++){
  if(i<v1.length)V.push([v1c[i],(1162-v1[i])/3]);
  else if(i<71)V.push([0,0]);
  else if(i<120)V.push([C[i][0]===1?1:0,1]);
  else if(i<147)V.push([C[i][0]===1?1:0,2+(i-120)*.2+(i%3)]);
  else V.push([v2c[i-147],(562-v2[i-147])/3]);
}
h=dash(621,102,1616)+dash(704,102,1616);
h+='<g shape-rendering="crispEdges">'+rect(102,602,1,186,LINE)+rect(1616,602,1,186,LINE);
V.forEach(function(v,i){
  var H=Math.round(v[1]),x=X(i);if(H<=0)return;
  if(v[0]===1)h+=rect(x-3,b-H,7,H,GRN);
  else if(H<2)h+=rect(x-3,b-1,7,1,RED);
  else h+='<rect x="'+(x-2.5)+'" y="'+(b-H+.5)+'" width="6" height="'+(H-1)+'" fill="'+BG+'" stroke="'+RED+'"/>';
});
var z9=[[260,937],[280,942],[300,938],[318,900],[338,883],[350,850],[370,790],[398,728],[418,700],[437,743],[458,725],[480,727],[500,720],[518,725],[535,768],[555,775],[575,820],[600,865],[630,910],[650,938],[680,938],[710,990],[750,1030],[775,1050],[800,1090],[830,1120],[868,1143],[940,1147],[1005,1147],[1024,1162]];
h+=poly(z9.map(function(p){return [+(p[0]/2.45).toFixed(1),+(400+p[1]/3).toFixed(1)]}),'#000');
var z12=[[0,434],[20,428],[55,408],[110,408],[150,400],[180,385],[200,367],[225,358],[245,315],[270,280],[300,250],[345,222],[370,150],[392,118],[415,127],[445,117],[465,107],[490,100],[511,72],[545,104],[560,120],[580,180],[600,215],[630,235],[655,178],[680,215],[705,230],[725,220],[760,232],[780,235],[797,253]];
var lt=[[677,786.5],[1065,786],[1120,783],[1163,780],[1220,770],[1273,748]].concat(z12.map(function(p){return [+(1280+p[0]/3).toFixed(1),+(600+p[1]/3).toFixed(1)]}));
h+=poly(lt,'#000');
h+=rect(102,787,1515,1,LINE)+'</g>';
h+=axis([99,625,'28万'])+axis([99,708,'14万']);
document.getElementById('p2').innerHTML=h;

// macd pane
h=dash(809,102,1616)+dash(842,102,1616)+dash(875,102,1616)+dash(908,102,1616);
h+='<g shape-rendering="crispEdges">'+rect(102,788,1,151,LINE)+rect(1616,788,1,151,LINE);
var cp=[[0,1],[6,5],[13,12],[20,8],[27,0],[28,-3],[34,-20],[39,-2],[40,2],[43,13],[49,2],[50,-2],[55,-5],[59,-1],[60,2],[68,8],[75,14],[82,6],[87,1],[88,-2],[96,-9],[108,-17],[116,-4],[119,-1],[120,1],[130,12],[140,17],[146,14]];
function ip(i){for(var k=1;k<cp.length;k++){if(i<=cp[k][0]){var a=cp[k-1],c=cp[k];return a[1]+(c[1]-a[1])*(i-a[0])/(c[0]-a[0])}}return 0}
var m2=[885,883,882,885,894,900,912,918,921,925,912,909,918,921,925,918,912,921,923,927,929,918,915,897,893,888,888,867,822,819,783,756,737,807];
for(i=0;i<n;i++){
  var x=X(i),t;
  if(i>=147){t=(925-m2[i-147])/3}
  else{t=ip(i);t=t*(1-.12*(i%3))}
  t=Math.round(t);
  if(t>0)h+=rect(x,908-t,1,t,RED);else if(t<0)h+=rect(x,908,1,-t,GRN);
}
function ov(a){return a.map(function(p){return [+(p[0]*1.2245).toFixed(1),+(p[1]*1.2245).toFixed(1)]})}
function z(a){return a.map(function(p){return [+(1280+p[0]/3).toFixed(1),+(600+p[1]/3).toFixed(1)]})}
var dea=ov([[85,733],[120,735],[160,725],[200,718],[250,718],[300,728],[340,738],[400,733],[470,731],[540,729],[600,718],[650,714],[700,722],[760,733],[820,746],[870,758],[920,750],[980,735],[1040,725]]).concat(z([[0,884],[60,868],[130,857],[215,853],[330,847],[400,843],[490,843],[545,840],[630,823],[690,795],[740,757],[780,715],[797,710]]));
var dif=ov([[85,735],[110,735],[140,728],[175,716],[200,715],[240,718],[270,725],[300,737],[330,745],[345,738],[370,733],[420,732],[470,730],[520,728],[570,722],[600,713],[630,710],[660,715],[700,722],[740,727],[780,737],[820,750],[860,763],[900,752],[950,745],[1000,730],[1040,722]]).concat(z([[0,862],[30,855],[70,845],[130,843],[150,850],[215,852],[250,843],[330,846],[390,835],[430,840],[490,843],[540,835],[570,817],[630,803],[660,785],[680,747],[705,733],[740,680],[775,630],[797,647]]));
h+=poly(dea,'#2e62d9')+poly(dif,'#000');
h+=rect(1542,927,1,11,'#666')+rect(102,938,1515,1,LINE)+'</g>';
h+=axis([100,813,'60.0'])+axis([100,847,'40.0'])+axis([100,880,'20.0'])+axis([100,913,'0.0']);
document.getElementById('p3').innerHTML=h;

// dates
var dl=[[200,'2021/03/01'],[520,'2021/09/01'],[808,'2021/11/01'],[1168,'2022/01/04'],[1448,'2022/03/01']];
document.getElementById('pd').innerHTML=dl.map(function(d){return text(d[0],956,d[1],'#808080')}).join('');

// side tabs
var s='',GL='#808080';
function tab(T,act){var B=T+84;return '<path d="M37 '+T+'H11Q7 '+T+' 7 '+(T+4)+'V'+B+'L37 '+(B+29)+'" fill="none" stroke="'+(act?'#666':GL)+'"/>'}
[94,202,302,402,502].forEach(function(T,i){s+=tab(T,i===1)});
s+='<path d="M37.5 94V202M37.5 315V842L2 884" fill="none" stroke="'+GL+'" stroke-width="1"/>';
function tt(x,y,str,c){return '<text x="'+x+'" y="'+y+'"'+(c?' class="active"':'')+'>'+str+'</text>'}
[['分',131],['时',151],['图',170]].forEach(function(a){s+=tt(22,a[1],a[0])});
[['K',235],['线',256],['图',274]].forEach(function(a){s+=tt(22,a[1],a[0],1)});
[['资',336],['讯',355],['链',375]].forEach(function(a){s+=tt(22,a[1],a[0])});
s+='<text x="17" y="418" transform="rotate(90 17 418)" style="text-anchor:start">F</text><text x="17" y="432" transform="rotate(90 17 432)" style="text-anchor:start;letter-spacing:4px">10</text>';
[['资',464],['料',484]].forEach(function(a){s+=tt(22,a[1],a[0])});
[['页',525],['面',546],['下',564],['单',584]].forEach(function(a){s+=tt(22,a[1],a[0])});
document.getElementById('side').innerHTML=s;

// right tabs
var p='<g fill="none" stroke="#555">';
p+='<path d="M1690 945L1694 955.5H1740L1746 939"/><path d="M1736 940L1747 955.5H1795L1800 945"/><path d="M1797 945L1803 955.5H1850L1857 939"/>';
p+='<path d="M1627 938.5L1636 955.5H1683L1690 938.5" fill="#f5f5fb"/></g>';
p+='<rect x="1628" y="938" width="61" height="1" fill="#f5f5fb"/>';
[['明细',1643],['分价',1699],['分笔',1755],['统计',1811]].forEach(function(a){p+='<text x="'+a[1]+'" y="953">'+a[0]+'</text>'});
document.getElementById('ptabs').innerHTML=p;
})();
```
